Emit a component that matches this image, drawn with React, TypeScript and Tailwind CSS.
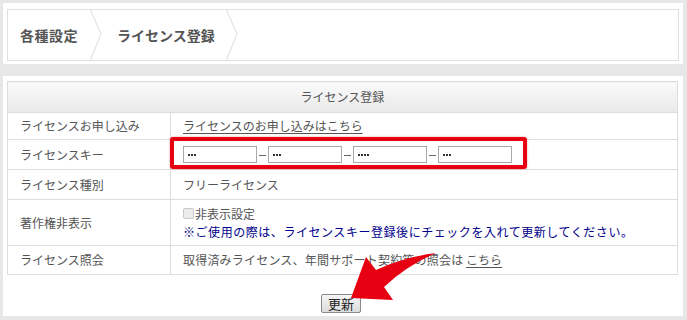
import React from 'react';

const font = { fontFamily: '"Noto Sans CJK JP", "Noto Sans", sans-serif' };

function Chevron() {
  return (
    <svg width="14" height="52" viewBox="0 0 14 52" className="shrink-0">
      <polyline points="1,0 12,25 1,52" fill="none" stroke="#dcdcdc" strokeWidth="1" />
    </svg>
  );
}

function KeyInput({ count }: { count: number }) {
  return (
    <div className="w-[74px] h-[17px] border border-[#a9a9a9] bg-white flex items-center gap-[1px] pl-[4px]">
      {Array.from({ length: count }).map((_, i) => (
        <span key={i} className="w-[2px] h-[2px] bg-[#333]" />
      ))}
    </div>
  );
}

function Dash() {
  return <span className="w-[7px] h-[1px] bg-[#666] mx-[2px] mt-[1px]" />;
}

function Row({ label, children, h }: { label: string; children: React.ReactNode; h: string }) {
  return (
    <tr className={h}>
      <td className="border border-[#dddddd] pl-[12px] text-[12px] text-[#555] align-middle">{label}</td>
      <td className="border border-[#dddddd] pl-[12px] text-[12px] text-[#555] align-middle">{children}</td>
    </tr>
  );
}

export default function App() {
  return (
    <div className="relative w-[687px] h-[320px] bg-[#e7e7e7] pt-[3px] pl-[3px] overflow-hidden" style={font}>
      {/* breadcrumb */}
      <div className="w-[680px] bg-white pt-[6px] pb-[3px] px-[4px]">
        <div className="h-[52px] border border-[#e0e0e0] flex items-center text-[14px] font-bold text-[#555]">
          <span className="pl-[12px] w-[81px] tracking-[0.5px]">各種設定</span>
          <Chevron />
          <span className="pl-[14px] pr-[10px]">ライセンス登録</span>
          <Chevron />
        </div>
      </div>

      {/* license form */}
      <div className="mt-[12px] w-[680px] h-[240px] bg-white pt-[5px] px-[4px]">
        <table className="w-[671px] border-collapse table-fixed">
          <colgroup>
            <col className="w-[163px]" />
            <col />
          </colgroup>
          <thead>
            <tr className="h-[31px]">
              <th
                colSpan={2}
                className="border border-[#dddddd] bg-gradient-to-b from-[#fafafa] to-[#e9e9e9] text-[12px] font-normal text-[#555]"
              >
                ライセンス登録
              </th>
            </tr>
          </thead>
          <tbody>
            <Row label="ライセンスお申し込み" h="h-[27px]">
              <span className="underline underline-offset-2">ライセンスのお申し込みはこちら</span>
            </Row>
            <Row label="ライセンスキー" h="h-[30px]">
              <div className="flex items-center">
                <KeyInput count={3} />
                <Dash />
                <KeyInput count={3} />
                <Dash />
                <KeyInput count={4} />
                <Dash />
                <KeyInput count={3} />
              </div>
            </Row>
            <Row label="ライセンス種別" h="h-[30px]">
              フリーライセンス
            </Row>
            <Row label="著作権非表示" h="h-[46px]">
              <div className="flex items-center leading-[18px]">
                <span className="w-[11px] h-[11px] border border-[#c8c8c8] bg-[#ececec] rounded-[2px] mr-[1px]" />
                非表示設定
              </div>
              <div className="text-[#00008b] leading-[18px] tracking-[0.55px]">
                ※ご使用の際は、ライセンスキー登録後にチェックを入れて更新してください。
              </div>
            </Row>
            <Row label="ライセンス照会" h="h-[29px]">
              <span className="tracking-[0.2px]">取得済みライセンス、年間サポート契約等の照会は</span>{' '}
              <span className="underline underline-offset-2">こちら</span>
            </Row>
          </tbody>
        </table>
        <div className="flex justify-center mt-[19px] pr-[4px]">
          <button className="w-[40px] h-[19px] border border-[#8a8a8a] rounded-[2px] bg-gradient-to-b from-[#f6f6f6] to-[#dcdcdc] text-[13px] leading-none text-[#222]">
            更新
          </button>
        </div>
      </div>

      {/* red highlight */}
      <div className="absolute left-[170px] top-[137px] w-[357px] h-[32px] border-[4px] border-[#e60012] rounded-[3px] shadow-[0_0_2px_rgba(230,0,18,0.5)]" />

      {/* red arrow */}
      <svg className="absolute left-0 top-0" width="687" height="320" viewBox="0 0 687 320">
        <path
          d="M436 253 Q404 257 376 270 L366 257 L351 298 L393 300 L384 287 Q406 266 436 253 Z"
          fill="#e60012"
        />
      </svg>
    </div>
  );
}
